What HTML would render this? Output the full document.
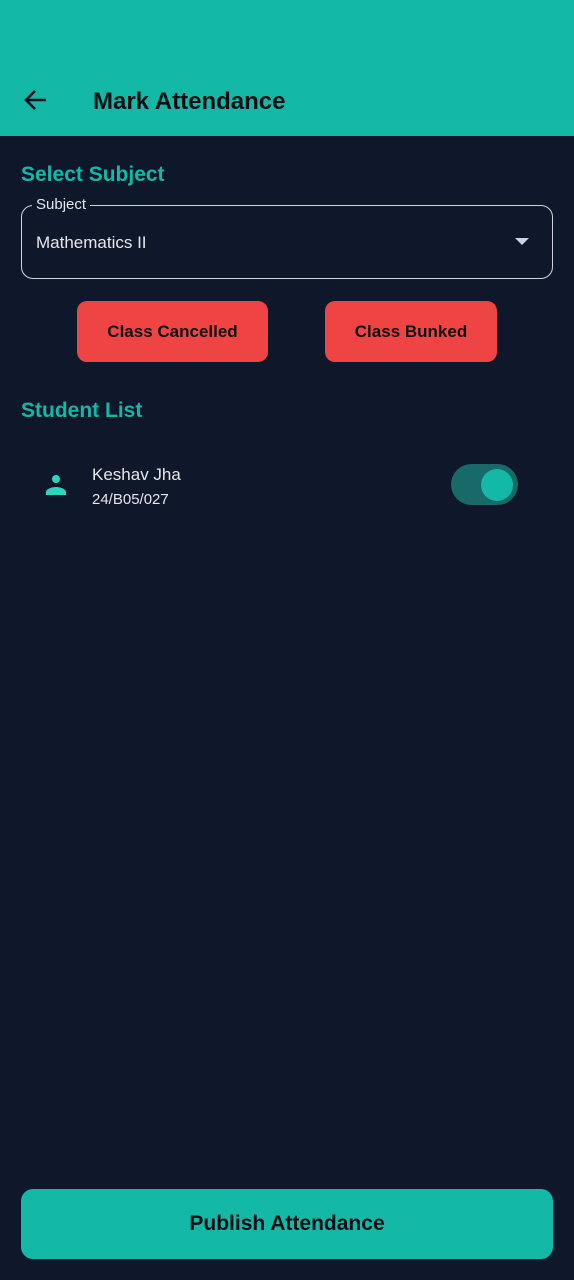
<!DOCTYPE html><html><head><style>
*{margin:0;padding:0;box-sizing:border-box}
body{width:574px;height:1280px;background:#0f172a;font-family:"Liberation Sans",sans-serif;position:relative;overflow:hidden}
.top{position:absolute;left:0;top:0;width:574px;height:136px;background:#14b8a6}
.title{position:absolute;left:93px;top:88px;font-size:24px;font-weight:bold;color:#0b0f14}
.h{position:absolute;left:21px;font-size:21px;font-weight:bold;color:#14b8a6}
.field{position:absolute;left:21px;top:205px;width:532px;height:74px;border:1.5px solid #d1d5db;border-radius:12px}
.lab{position:absolute;left:32px;top:196px;background:#0f172a;padding:0 4px;font-size:15px;color:#e5e7eb}
.btn{position:absolute;top:301px;height:61px;background:#ef4444;border-radius:10px;color:#111;font-size:17px;font-weight:bold;display:flex;align-items:center;justify-content:center}
.pub{position:absolute;left:21px;top:1189px;width:532px;height:70px;background:#14b8a6;border-radius:12px;display:flex;align-items:center;justify-content:center;font-size:21px;font-weight:bold;color:#0b0f14}
</style></head><body>
<div class="top"></div>
<svg style="position:absolute;left:23px;top:88px" width="26" height="24" viewBox="0 0 26 24"><path d="M23 12H4M12 3L3 12l9 9" stroke="#0b0f14" stroke-width="2.6" fill="none"/></svg>
<div class="title">Mark Attendance</div>
<div class="h" style="top:163px">Select Subject</div>
<div class="field"></div>
<div class="lab">Subject</div>
<div style="position:absolute;left:36px;top:233px;font-size:17px;color:#e5e7eb">Mathematics II</div>
<svg style="position:absolute;left:515px;top:238px" width="14" height="8"><path d="M0 0h14L7 7z" fill="#cbd5e1"/></svg>
<div class="btn" style="left:77px;width:191px">Class Cancelled</div>
<div class="btn" style="left:325px;width:172px">Class Bunked</div>
<div class="h" style="top:399px">Student List</div>
<svg style="position:absolute;left:44px;top:472px" width="24" height="24" viewBox="0 0 24 24"><circle cx="12" cy="7" r="4" fill="#2dd4bf"/><path d="M2 23v-3c0-3 6-5 10-5s10 2 10 5v3z" fill="#2dd4bf"/></svg>
<div style="position:absolute;left:92px;top:465px;font-size:17px;color:#e5e7eb">Keshav Jha</div>
<div style="position:absolute;left:92px;top:491px;font-size:15px;color:#e5e7eb">24/B05/027</div>
<div style="position:absolute;left:451px;top:464px;width:67px;height:41px;border-radius:21px;background:#176a68"></div>
<div style="position:absolute;left:481px;top:469px;width:32px;height:32px;border-radius:50%;background:#14b8a6"></div>
<div class="pub">Publish Attendance</div>
</body></html>
